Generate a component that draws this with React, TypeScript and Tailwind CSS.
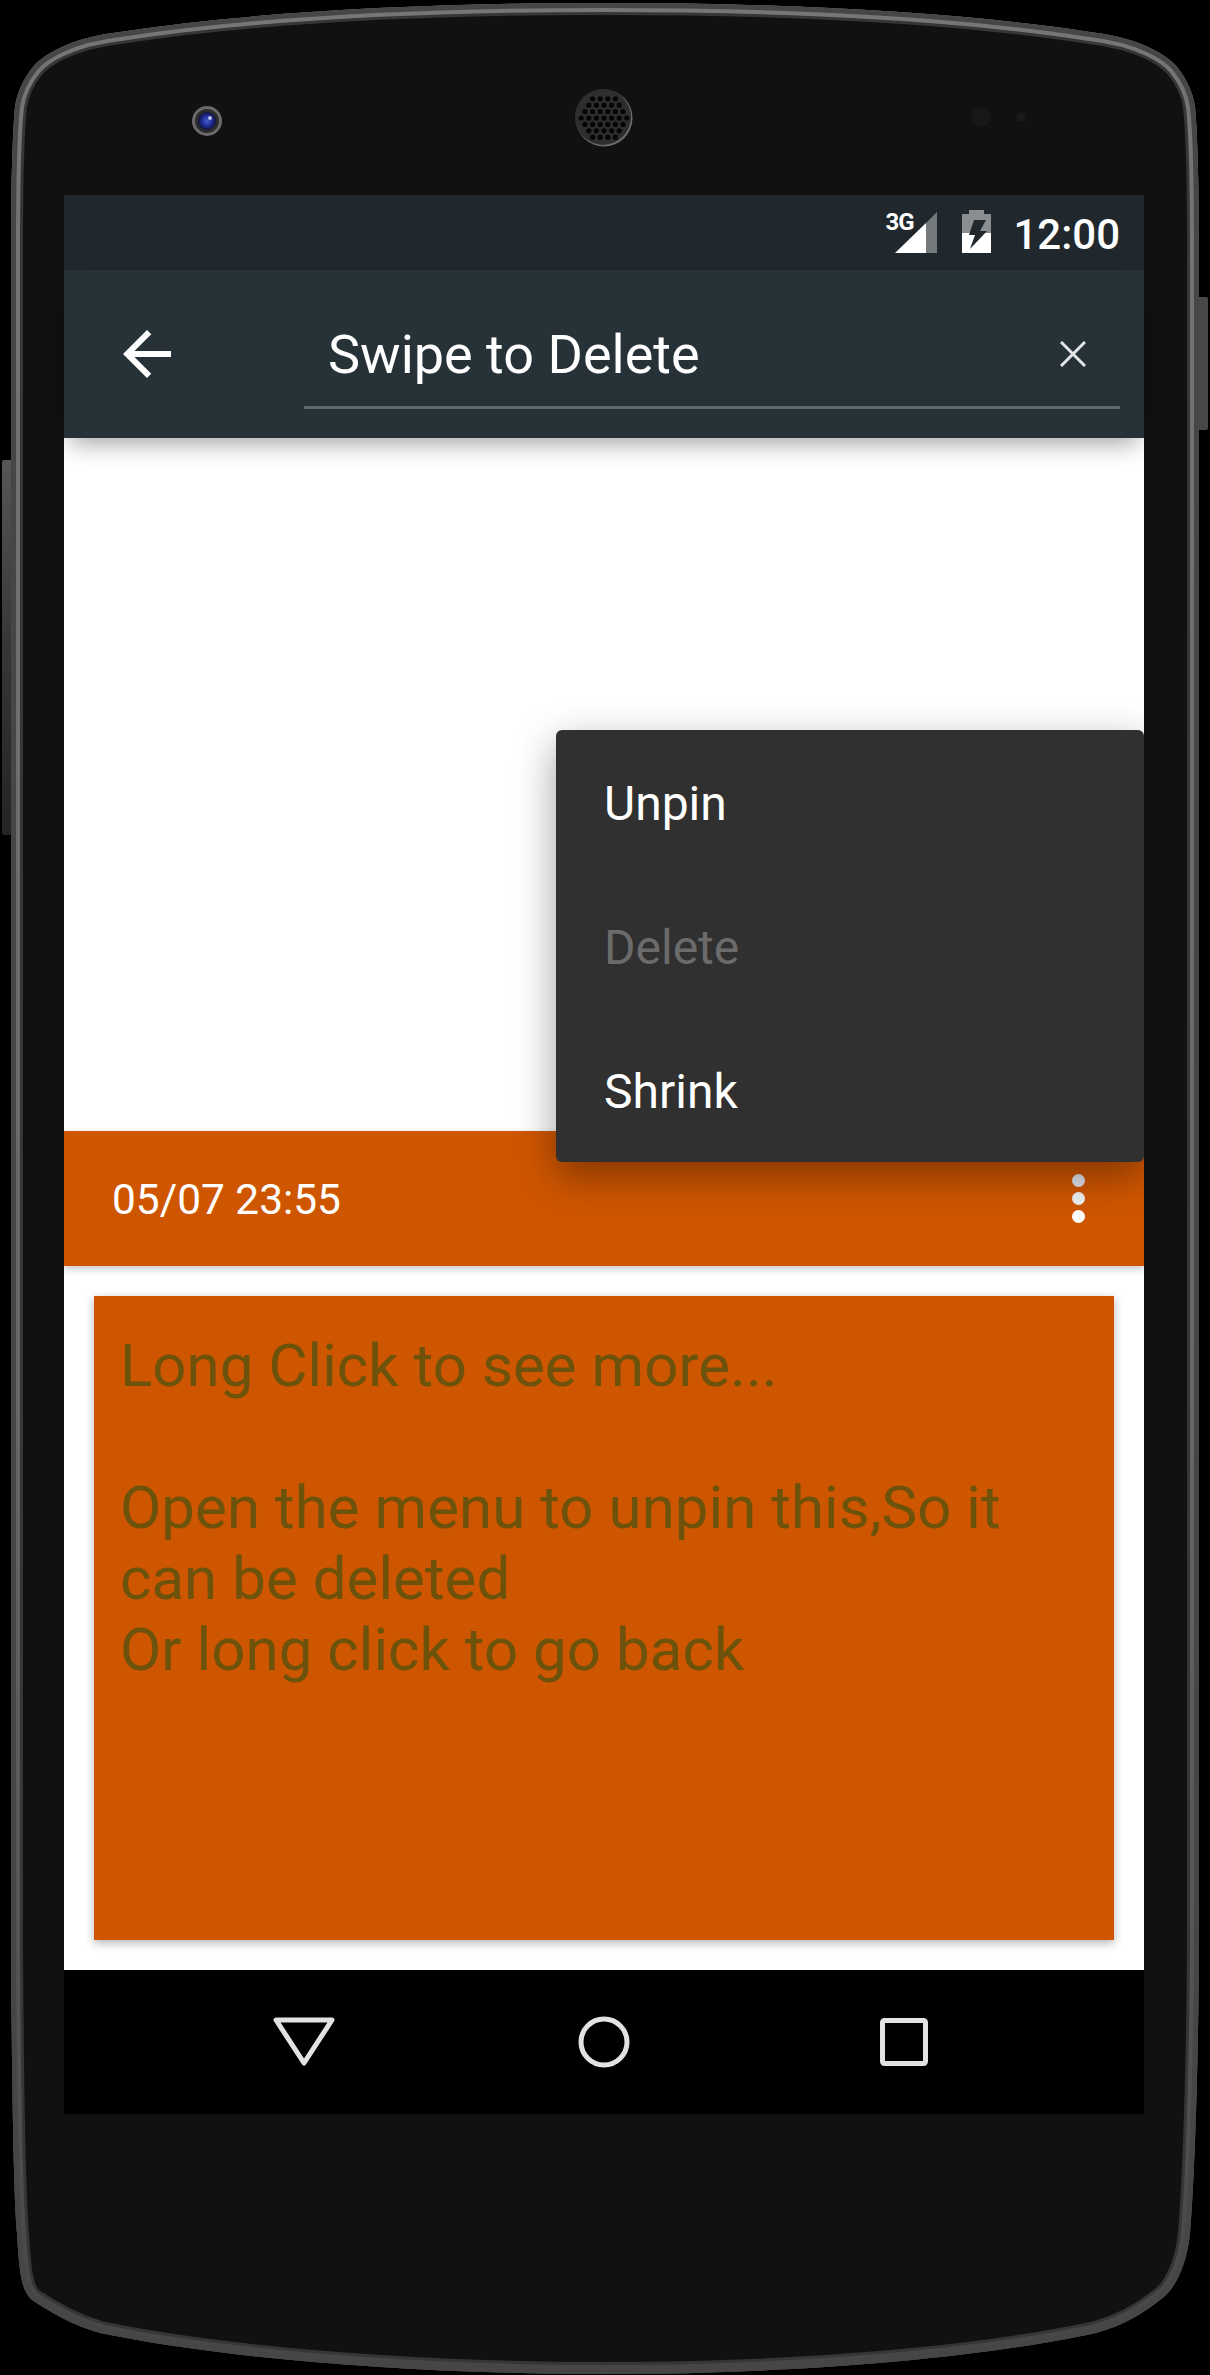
import React from 'react';

const OUTER =
  'M11 250 C11 180 13 125 15 107 C17 92 24 78 33 67 C42 56 68 38 120 32 C250 12 420 3 605 3 C790 3 960 12 1090 32 C1142 38 1168 56 1177 67 C1186 78 1193 92 1195 107 C1197 125 1199 180 1199 250 L1199 1950 C1198 2100 1193 2200 1190 2233 C1187 2265 1175 2290 1160 2300 C1145 2312 1125 2325 1096 2333 C980 2358 800 2374 605 2374 C410 2374 220 2358 100 2333 C72 2325 50 2312 32 2300 C20 2290 19 2265 17 2233 C14 2200 12 2100 11 1950 Z';

// speaker grille holes on a hex grid
function speakerHoles() {
  const holes: { x: number; y: number }[] = [];
  for (let row = -4; row <= 4; row++) {
    for (let col = -5; col <= 5; col++) {
      const x = 604 + col * 7.6 + (row % 2 === 0 ? 0 : 3.8);
      const y = 118 + row * 6.4;
      if (Math.hypot(x - 604, y - 118) < 24) holes.push({ x, y });
    }
  }
  return holes;
}

function PhoneBody() {
  return (
    <svg className="absolute left-0 top-0" width="1210" height="2375" viewBox="0 0 1210 2375">
      <defs>
        <clipPath id="body">
          <path d={OUTER} />
        </clipPath>
        <linearGradient id="edge" x1="0" y1="0" x2="0" y2="1">
          <stop offset="0" stopColor="#767676" />
          <stop offset="0.6" stopColor="#666666" />
          <stop offset="1" stopColor="#464646" />
        </linearGradient>
        <linearGradient id="volume" x1="0" y1="0" x2="0" y2="1">
          <stop offset="0" stopColor="#565656" />
          <stop offset="0.5" stopColor="#363636" />
          <stop offset="1" stopColor="#242424" />
        </linearGradient>
        <radialGradient id="lens" cx="0.5" cy="0.5" r="0.5">
          <stop offset="0" stopColor="#4a5ad0" />
          <stop offset="0.6" stopColor="#1c2a90" />
          <stop offset="1" stopColor="#10143c" />
        </radialGradient>
      </defs>
      {/* side buttons */}
      <rect x="1196" y="297" width="12" height="133" rx="2" fill="#484848" />
      <rect x="2" y="460" width="12" height="375" rx="2" fill="url(#volume)" />
      <path d={OUTER} fill="#111111" />
      <g clipPath="url(#body)" fill="none">
        <path d={OUTER} stroke="#363636" strokeWidth="24" />
        <path d={OUTER} stroke="url(#edge)" strokeWidth="18" />
        <path d={OUTER} stroke="#464646" strokeWidth="10" />
      </g>
      {/* front camera */}
      <circle cx="207" cy="121" r="15" fill="#6a6a6a" />
      <circle cx="207" cy="121" r="12" fill="#2c2c2c" />
      <circle cx="207" cy="121" r="9" fill="url(#lens)" />
      <circle cx="210" cy="118" r="2" fill="#b8c4f0" />
      {/* speaker */}
      <circle cx="604" cy="118" r="28.5" fill="#6b6b6b" />
      <circle cx="603" cy="117" r="28" fill="#2e2e2e" />
      {speakerHoles().map((h, i) => (
        <circle key={i} cx={h.x} cy={h.y} r="2.6" fill="#050505" />
      ))}
      {/* sensors */}
      <circle cx="981" cy="117" r="10" fill="#181818" />
      <circle cx="1021" cy="117" r="5" fill="#1a1a1a" />
    </svg>
  );
}

function StatusIcons() {
  return (
    <div className="relative w-[108px] h-[45px]">
      <span className="absolute left-0 top-0 text-[24px] leading-[24px] font-bold text-white tracking-[-1px]">3G</span>
      <svg className="absolute left-0 top-0" width="108" height="45" viewBox="0 0 108 45">
        <path d="M52 2 V43 H41 V13 Z" fill="#757a7d" />
        <path d="M10 43 L41 13 V43 Z" fill="#ffffff" />
        <path d="M84 0 H99 V4 H106 V43 H77 V4 H84 Z" fill="#8b8e90" />
        <path d="M77 23 H106 V43 H77 Z" fill="#ffffff" />
        <path d="M89 10 H101 L95 21 H102 L85 39 L90 25 H84 Z" fill="#20282d" />
      </svg>
    </div>
  );
}

function NavBar() {
  return (
    <div className="h-[144px] bg-black flex items-center justify-center pb-[1px]">
      <div className="w-[300px] flex justify-center">
        <svg width="64" height="50" viewBox="0 0 64 50">
          <path d="M4 3 H60 L32 46 Z" fill="none" stroke="#e2e2e2" strokeWidth="5" strokeLinejoin="round" />
        </svg>
      </div>
      <div className="w-[300px] flex justify-center">
        <svg width="52" height="52" viewBox="0 0 52 52">
          <circle cx="26" cy="26" r="23" fill="none" stroke="#e2e2e2" strokeWidth="5" />
        </svg>
      </div>
      <div className="w-[300px] flex justify-center">
        <svg width="48" height="48" viewBox="0 0 48 48">
          <rect x="2.5" y="2.5" width="43" height="43" rx="2" fill="none" stroke="#e2e2e2" strokeWidth="5" />
        </svg>
      </div>
    </div>
  );
}

function PopupMenu() {
  const items = [
    { label: 'Unpin', color: 'text-white' },
    { label: 'Delete', color: 'text-[#6b6b6b]' },
    { label: 'Shrink', color: 'text-white' },
  ];
  return (
    <div className="absolute right-0 top-[292px] w-[588px] rounded-[6px] bg-[#303030] shadow-[0_14px_40px_rgba(0,0,0,0.38)]">
      {items.map((item) => (
        <div key={item.label} className={`h-[144px] flex items-center pl-[48px] pt-[3px] text-[48px] ${item.color}`}>
          {item.label}
        </div>
      ))}
    </div>
  );
}

export default function App() {
  return (
    <div className="relative w-[1210px] h-[2375px] bg-black overflow-hidden font-[Roboto,sans-serif]">
      <PhoneBody />
      <div className="relative ml-[64px] w-[1080px] pt-[195px] flex flex-col">
        {/* status bar */}
        <div className="h-[75px] bg-[#20282d] flex items-center justify-end pr-[24px] gap-[20px]">
          <StatusIcons />
          <span className="text-[42px] leading-none font-medium text-white pt-[4px]">12:00</span>
        </div>

        {/* search style action bar */}
        <div className="relative z-10 h-[168px] bg-[#263238] flex items-center shadow-[0_10px_24px_-6px_rgba(0,0,0,0.4)]">
          <svg className="ml-[47px] shrink-0" width="72" height="72" viewBox="0 0 24 24" fill="#ffffff">
            <path d="M20 11H7.83l5.59-5.59L12 4l-8 8 8 8 1.41-1.41L7.83 13H20v-2z" />
          </svg>
          <div className="ml-[121px] mr-[24px] flex-1 h-[168px] relative flex items-center pl-[24px] pt-[1px]">
            <span className="text-[54px] text-white">Swipe to Delete</span>
            <svg className="absolute right-[34px] top-[71px]" width="26" height="26" viewBox="0 0 26 26">
              <path d="M1 1 L25 25 M25 1 L1 25" stroke="#e4e6e7" strokeWidth="3" />
            </svg>
            <div className="absolute left-0 right-0 top-[136px] h-[3px] bg-[#5d6a71]" />
          </div>
        </div>

        {/* content */}
        <div className="relative h-[1532px] bg-white flex flex-col justify-end pb-[30px] overflow-hidden">
          <div className="h-[135px] bg-[#cf5600] flex items-center justify-between pl-[48px] pr-[59px] shadow-[0_3px_7px_rgba(0,0,0,0.22)]">
            <span className="text-[42.4px] text-white pt-[3px]">05/07 23:55</span>
            <div className="flex flex-col gap-[5px]">
              <div className="w-[13px] h-[13px] rounded-full bg-[#e4e6ec]" />
              <div className="w-[13px] h-[13px] rounded-full bg-[#eef0f2]" />
              <div className="w-[13px] h-[13px] rounded-full bg-white" />
            </div>
          </div>
          <div className="mt-[30px] mx-[30px] h-[644px] bg-[#cf5600] pt-[34px] pl-[26px] pr-[30px] text-[60px] leading-[71px] tracking-[0.04px] text-[#6c520a] shadow-[0_3px_9px_rgba(0,0,0,0.3)]">
            <p>Long Click to see more...</p>
            <p className="mt-[71px]">Open the menu to unpin this,So it can be deleted</p>
            <p>Or long click to go back</p>
          </div>
          <PopupMenu />
        </div>

        <NavBar />
      </div>
    </div>
  );
}
